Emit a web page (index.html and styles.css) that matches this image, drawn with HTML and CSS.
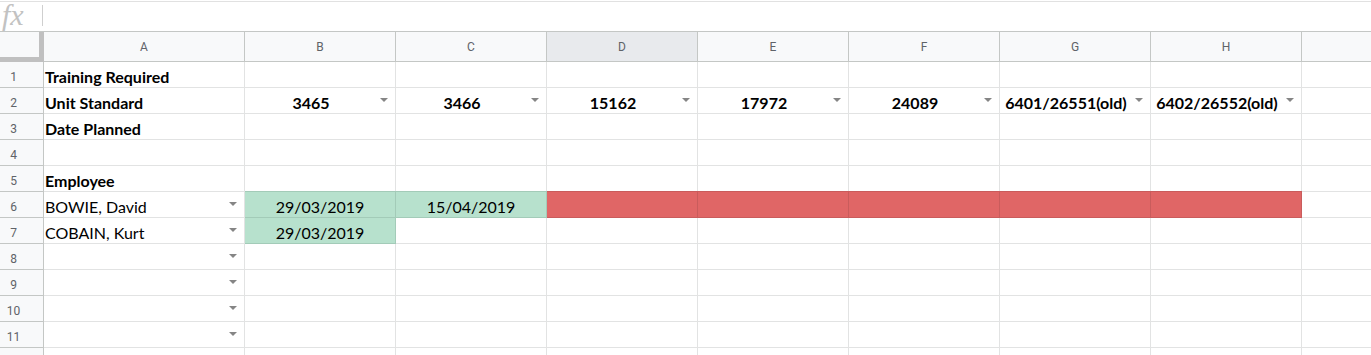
FILE: index.html
```html
<!DOCTYPE html>
<html lang="en">
<head>
    <meta charset="UTF-8">
    <meta name="viewport" content="width=device-width, initial-scale=1.0">
    <title>Training Matrix</title>
    <link rel="stylesheet" href="styles.css">
</head>
<body>

    <div class="formula-bar">
        <span class="fx">fx</span>
        <span class="sep"></span>
    </div>

    <div class="sheet">
        <!-- column headers -->
        <div class="corner"></div>
        <div class="hd">A</div>
        <div class="hd">B</div>
        <div class="hd">C</div>
        <div class="hd sel">D</div>
        <div class="hd">E</div>
        <div class="hd">F</div>
        <div class="hd">G</div>
        <div class="hd">H</div>
        <div class="hd"></div>

        <!-- row 1 -->
        <div class="rh">1</div>
        <div class="c"><span class="txt b">Training Required</span></div>
        <div class="c"></div><div class="c"></div><div class="c"></div><div class="c"></div>
        <div class="c"></div><div class="c"></div><div class="c"></div><div class="c"></div>

        <!-- row 2 -->
        <div class="rh">2</div>
        <div class="c"><span class="txt b">Unit Standard</span></div>
        <div class="c"><span class="txt b ctr">3465</span><span class="dd"></span></div>
        <div class="c"><span class="txt b ctr">3466</span><span class="dd"></span></div>
        <div class="c"><span class="txt b ctr">15162</span><span class="dd"></span></div>
        <div class="c"><span class="txt b ctr">17972</span><span class="dd"></span></div>
        <div class="c"><span class="txt b ctr">24089</span><span class="dd"></span></div>
        <div class="c"><span class="txt b ctr">6401/26551(old)</span><span class="dd"></span></div>
        <div class="c"><span class="txt b ctr">6402/26552(old)</span><span class="dd"></span></div>
        <div class="c"></div>

        <!-- row 3 -->
        <div class="rh">3</div>
        <div class="c"><span class="txt b">Date Planned</span></div>
        <div class="c"></div><div class="c"></div><div class="c"></div><div class="c"></div>
        <div class="c"></div><div class="c"></div><div class="c"></div><div class="c"></div>

        <!-- row 4 -->
        <div class="rh">4</div>
        <div class="c"></div><div class="c"></div><div class="c"></div><div class="c"></div><div class="c"></div>
        <div class="c"></div><div class="c"></div><div class="c"></div><div class="c"></div>

        <!-- row 5 -->
        <div class="rh">5</div>
        <div class="c"><span class="txt b">Employee</span></div>
        <div class="c"></div><div class="c"></div><div class="c"></div><div class="c"></div>
        <div class="c"></div><div class="c"></div><div class="c"></div><div class="c"></div>

        <!-- row 6 -->
        <div class="rh">6</div>
        <div class="c"><span class="txt">BOWIE, David</span><span class="dd"></span></div>
        <div class="c green"><span class="txt ctr">29/03/2019</span></div>
        <div class="c green"><span class="txt ctr">15/04/2019</span></div>
        <div class="c red"></div>
        <div class="c red"></div>
        <div class="c red"></div>
        <div class="c red"></div>
        <div class="c red"></div>
        <div class="c"></div>

        <!-- row 7 -->
        <div class="rh">7</div>
        <div class="c"><span class="txt">COBAIN, Kurt</span><span class="dd"></span></div>
        <div class="c green"><span class="txt ctr">29/03/2019</span></div>
        <div class="c"></div><div class="c"></div><div class="c"></div><div class="c"></div>
        <div class="c"></div><div class="c"></div><div class="c"></div>

        <!-- rows 8 - 11: empty employee slots -->
        <div class="rh">8</div>
        <div class="c"><span class="txt"></span><span class="dd"></span></div>
        <div class="c"></div><div class="c"></div><div class="c"></div><div class="c"></div>
        <div class="c"></div><div class="c"></div><div class="c"></div><div class="c"></div>

        <div class="rh">9</div>
        <div class="c"><span class="txt"></span><span class="dd"></span></div>
        <div class="c"></div><div class="c"></div><div class="c"></div><div class="c"></div>
        <div class="c"></div><div class="c"></div><div class="c"></div><div class="c"></div>

        <div class="rh">10</div>
        <div class="c"><span class="txt"></span><span class="dd"></span></div>
        <div class="c"></div><div class="c"></div><div class="c"></div><div class="c"></div>
        <div class="c"></div><div class="c"></div><div class="c"></div><div class="c"></div>

        <div class="rh">11</div>
        <div class="c"><span class="txt"></span><span class="dd"></span></div>
        <div class="c"></div><div class="c"></div><div class="c"></div><div class="c"></div>
        <div class="c"></div><div class="c"></div><div class="c"></div><div class="c"></div>

        <div class="rh"></div>
        <div class="c"></div><div class="c"></div><div class="c"></div><div class="c"></div><div class="c"></div>
        <div class="c"></div><div class="c"></div><div class="c"></div><div class="c"></div>
    </div>

</body>
</html>
```

FILE: styles.css
```css
* {
    box-sizing: border-box;
}

body {
    margin: 0;
    background-color: white;
    font-family: Lato, "Open Sans", sans-serif;
    overflow: hidden;
}

.formula-bar {
    display: flex;
    align-items: flex-start;
    height: 31px;
    margin-top: 1px;
    border-top: 1px solid #e1e1e1;
    border-bottom: 1px solid #c4c7c5;
}

.fx {
    width: 42px;
    padding-left: 2px;
    font-family: "Liberation Serif", serif;
    font-style: italic;
    font-size: 30px;
    line-height: 26px;
    color: #c2c2c2;
}

.sep {
    width: 1px;
    height: 21px;
    margin-top: 3px;
    background-color: #cfcfcf;
}

.sheet {
    display: grid;
    grid-template-columns: 44px 201px repeat(8, 151px);
    grid-template-rows: 30px;
    grid-auto-rows: 26px;
}

.corner {
    background-color: #f8f9fa;
    border-right: 5px solid #c0c0c0;
    border-bottom: 5px solid #c0c0c0;
}

.hd {
    background-color: #f8f9fa;
    border-right: 1px solid #c4c7c5;
    border-bottom: 1px solid #c4c7c5;
    padding-top: 3px;
    font-family: Roboto, Arial, sans-serif;
    font-size: 12px;
    line-height: 25px;
    color: #5f6368;
    text-align: center;
}

.hd.sel {
    background-color: #e8eaed;
}

.rh {
    background-color: #f8f9fa;
    border-right: 1px solid #c4c7c5;
    border-bottom: 1px solid #c4c7c5;
    padding: 8px 16px 0 0;
    font-family: Roboto, Arial, sans-serif;
    font-size: 12px;
    line-height: 14px;
    color: #5f6368;
    text-align: center;
}

.c {
    display: flex;
    align-items: flex-start;
    border-right: 1px solid #e2e3e3;
    border-bottom: 1px solid #e2e3e3;
    font-size: 16px;
    color: black;
    white-space: nowrap;
    overflow: hidden;
}

.txt {
    flex: 1;
    min-width: 0;
    padding: 4px 1px 0;
    line-height: 21px;
}

.b {
    font-weight: 700;
}

.ctr {
    display: flex;
    justify-content: center;
}

/* data validation chip */
.dd {
    flex: none;
    width: 0;
    height: 0;
    margin: 10px 7px 0 3px;
    border-left: 4.5px solid transparent;
    border-right: 4.5px solid transparent;
    border-top: 4.5px solid #858585;
}

.green {
    background-color: #b7e1cd;
    border-color: #a3cbb8;
    box-shadow: 0 -1px 0 #a3cbb8;
}

.red {
    background-color: #e06666;
    border-color: #c95c5c;
    box-shadow: 0 -1px 0 #c95c5c;
}
```
